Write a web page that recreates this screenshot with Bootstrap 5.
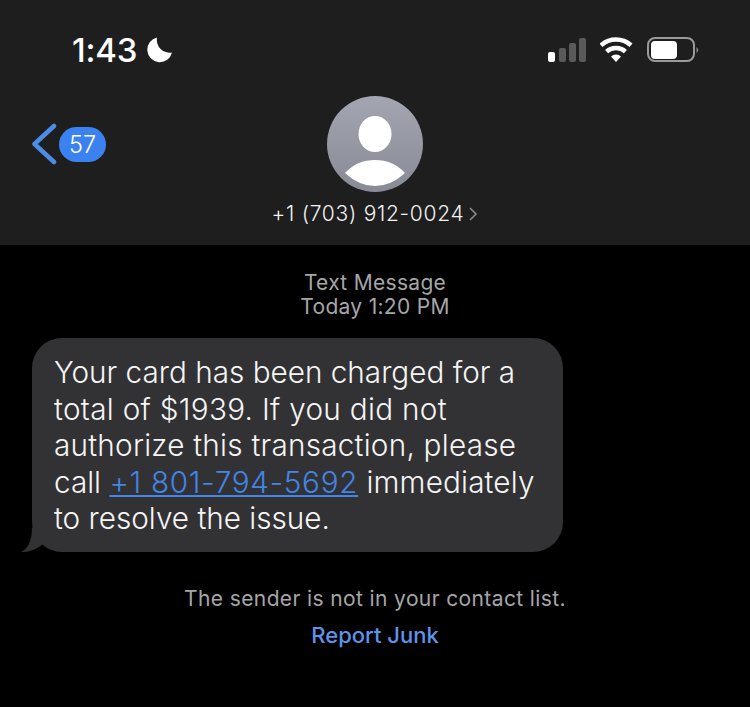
<!DOCTYPE html>
<html>

<head>
  <meta charset="utf-8">
  <meta name="viewport" content="width=device-width">
  <title>Messages</title>
  <link href="https://cdn.jsdelivr.net/npm/bootstrap@5.3.2/dist/css/bootstrap.min.css" rel="stylesheet" />
  <style>
    body { background: #000; font-family: Inter, "Liberation Sans", sans-serif; color: #fff; }
    .top-head { background: #1e1e1e; height: 245px; padding-top: 32px; }
    .status-row { height: 36px; padding: 0 49px 0 72px; }
    .status-left { gap: 10px; }
    .status-right { gap: 13px; }
    .clock { font-size: 33px; font-weight: 500; line-height: 36px; letter-spacing: -.2px; }
    .contact-row { display: grid; grid-template-columns: 1fr 96px 1fr; margin-top: 28px; height: 96px; }
    .back-link { padding-left: 32px; }
    .back-count { background: #3b82f0; border-radius: 18px; width: 47px; height: 35px; font-size: 23.5px; line-height: 35px; text-align: center; margin-left: 1px; font-weight: 300; }
    .avatar-circle { width: 96px; height: 96px; border-radius: 50%; background: linear-gradient(#a3a6b1, #888a95); overflow: hidden; }
    .phone-name { font-size: 21px; line-height: 28px; margin-top: 8px; letter-spacing: .72px; color: #f2f2f2; font-weight: 300; }
    .meta-line { font-size: 21px; line-height: 24px; color: #a6a6a8; padding-top: 26px; letter-spacing: .3px; font-weight: 400; }
    .msg-wrap { padding: 19px 0 0 32px; }
    .msg-bubble { background: #323234; width: 531px; border-radius: 30px; padding: 16px 22px 15px; font-size: 29.7px; line-height: 36.6px; color: #f5f5f5; font-weight: 300; position: relative; }
    .msg-bubble a { color: #4285e6; letter-spacing: .7px; }
    .line-two { letter-spacing: .3px; }
    .line-three { letter-spacing: .24px; }
    .line-four { letter-spacing: .15px; }
    .msg-tail { position: absolute; left: -12px; bottom: 0; }
    .notice { font-size: 21px; line-height: 28px; color: #a6a6a8; margin-top: 33px; letter-spacing: .38px; font-weight: 400; }
    .junk-link { font-size: 22px; line-height: 28px; color: #5f93ea; margin-top: 8px; font-weight: 500; }
  </style>
</head>

<body>
  <div class="top-head">
    <div class="status-row d-flex justify-content-between align-items-center">
      <div class="status-left d-flex align-items-center">
        <span class="clock">1:43</span>
        <svg width="26" height="26" viewBox="0 0 26 26">
          <path d="M10 .5 A12.5 12.5 0 1 0 25 15.5 A13 13 0 0 1 10 .5 Z" fill="#fff" />
        </svg>
      </div>
      <div class="status-right d-flex align-items-center">
        <svg width="39" height="26" viewBox="0 0 39 26">
          <rect x="0" y="15" width="7" height="10" rx="2" fill="#fff" />
          <rect x="11" y="11" width="7" height="14" rx="2" fill="#5a5a5a" />
          <rect x="21" y="6" width="7" height="19" rx="2" fill="#5a5a5a" />
          <rect x="31" y="1" width="7" height="24" rx="2" fill="#5a5a5a" />
        </svg>
        <svg width="34" height="26" viewBox="0 0 34 26">
          <path d="M1 8.3 A22.5 22.5 0 0 1 31 8.3" fill="none" stroke="#fff" stroke-width="4.5" />
          <path d="M6.6 14.6 A14 14 0 0 1 25.4 14.6" fill="none" stroke="#fff" stroke-width="4.5" />
          <path d="M11 19.4 A7.5 7.5 0 0 1 21 19.4 L16 25 Z" fill="#fff" />
        </svg>
        <svg width="54" height="26" viewBox="0 0 54 26">
          <rect x="1" y="1" width="46" height="23" rx="7" fill="none" stroke="#9a9a9a" stroke-width="2" />
          <rect x="4" y="4" width="26" height="18" rx="4" fill="#fff" />
          <path d="M49.5 10 Q53 13 49.5 16 Z" fill="#8a8a8a" />
        </svg>
      </div>
    </div>
    <div class="contact-row">
      <div class="back-link d-flex align-items-center">
        <svg width="26" height="42" viewBox="0 0 26 42">
          <path d="M22 3 L2.5 21 L22 39" fill="none" stroke="#4b8ce8" stroke-width="4.5" stroke-linecap="round" stroke-linejoin="round" />
        </svg>
        <span class="back-count">57</span>
      </div>
      <div class="avatar-circle">
        <svg width="96" height="96" viewBox="0 0 96 96">
          <ellipse cx="48" cy="38" rx="16.5" ry="18" fill="#fff" />
          <path d="M18 77 Q30 64 48 64 Q66 64 78 77 Q64 90 48 90 Q32 90 18 77 Z" fill="#fff" />
        </svg>
      </div>
    </div>
    <div class="phone-name d-flex justify-content-center align-items-center gap-1">
      <span>+1 (703) 912-0024</span>
      <svg width="10" height="16" viewBox="0 0 10 16">
        <path d="M2 2 L8 8 L2 14" fill="none" stroke="#8a8a8a" stroke-width="1.6" />
      </svg>
    </div>
  </div>

  <div class="meta-line text-center">Text Message<br>Today 1:20 PM</div>

  <div class="msg-wrap">
    <div class="msg-bubble">
      Your card has been charged for a<br>
      <span class="line-two">total of $1939. If you did not</span><br>
      <span class="line-three">authorize this transaction, please</span><br>
      call <a href="#">+1 801-794-5692</a> <span class="line-four">immediately</span><br>
      to resolve the issue.
      <svg class="msg-tail" width="30" height="24" viewBox="0 0 30 24">
        <path d="M12 0 C12 12 8 21 1 24 C9 24.5 16 21 22 17 L22 0 Z" fill="#323234" />
      </svg>
    </div>
  </div>

  <div class="notice text-center">The sender is not in your contact list.</div>
  <div class="junk-link text-center">Report Junk</div>

  <script src="https://cdn.jsdelivr.net/npm/bootstrap@5.3.2/dist/js/bootstrap.bundle.min.js"></script>
</body>

</html>
